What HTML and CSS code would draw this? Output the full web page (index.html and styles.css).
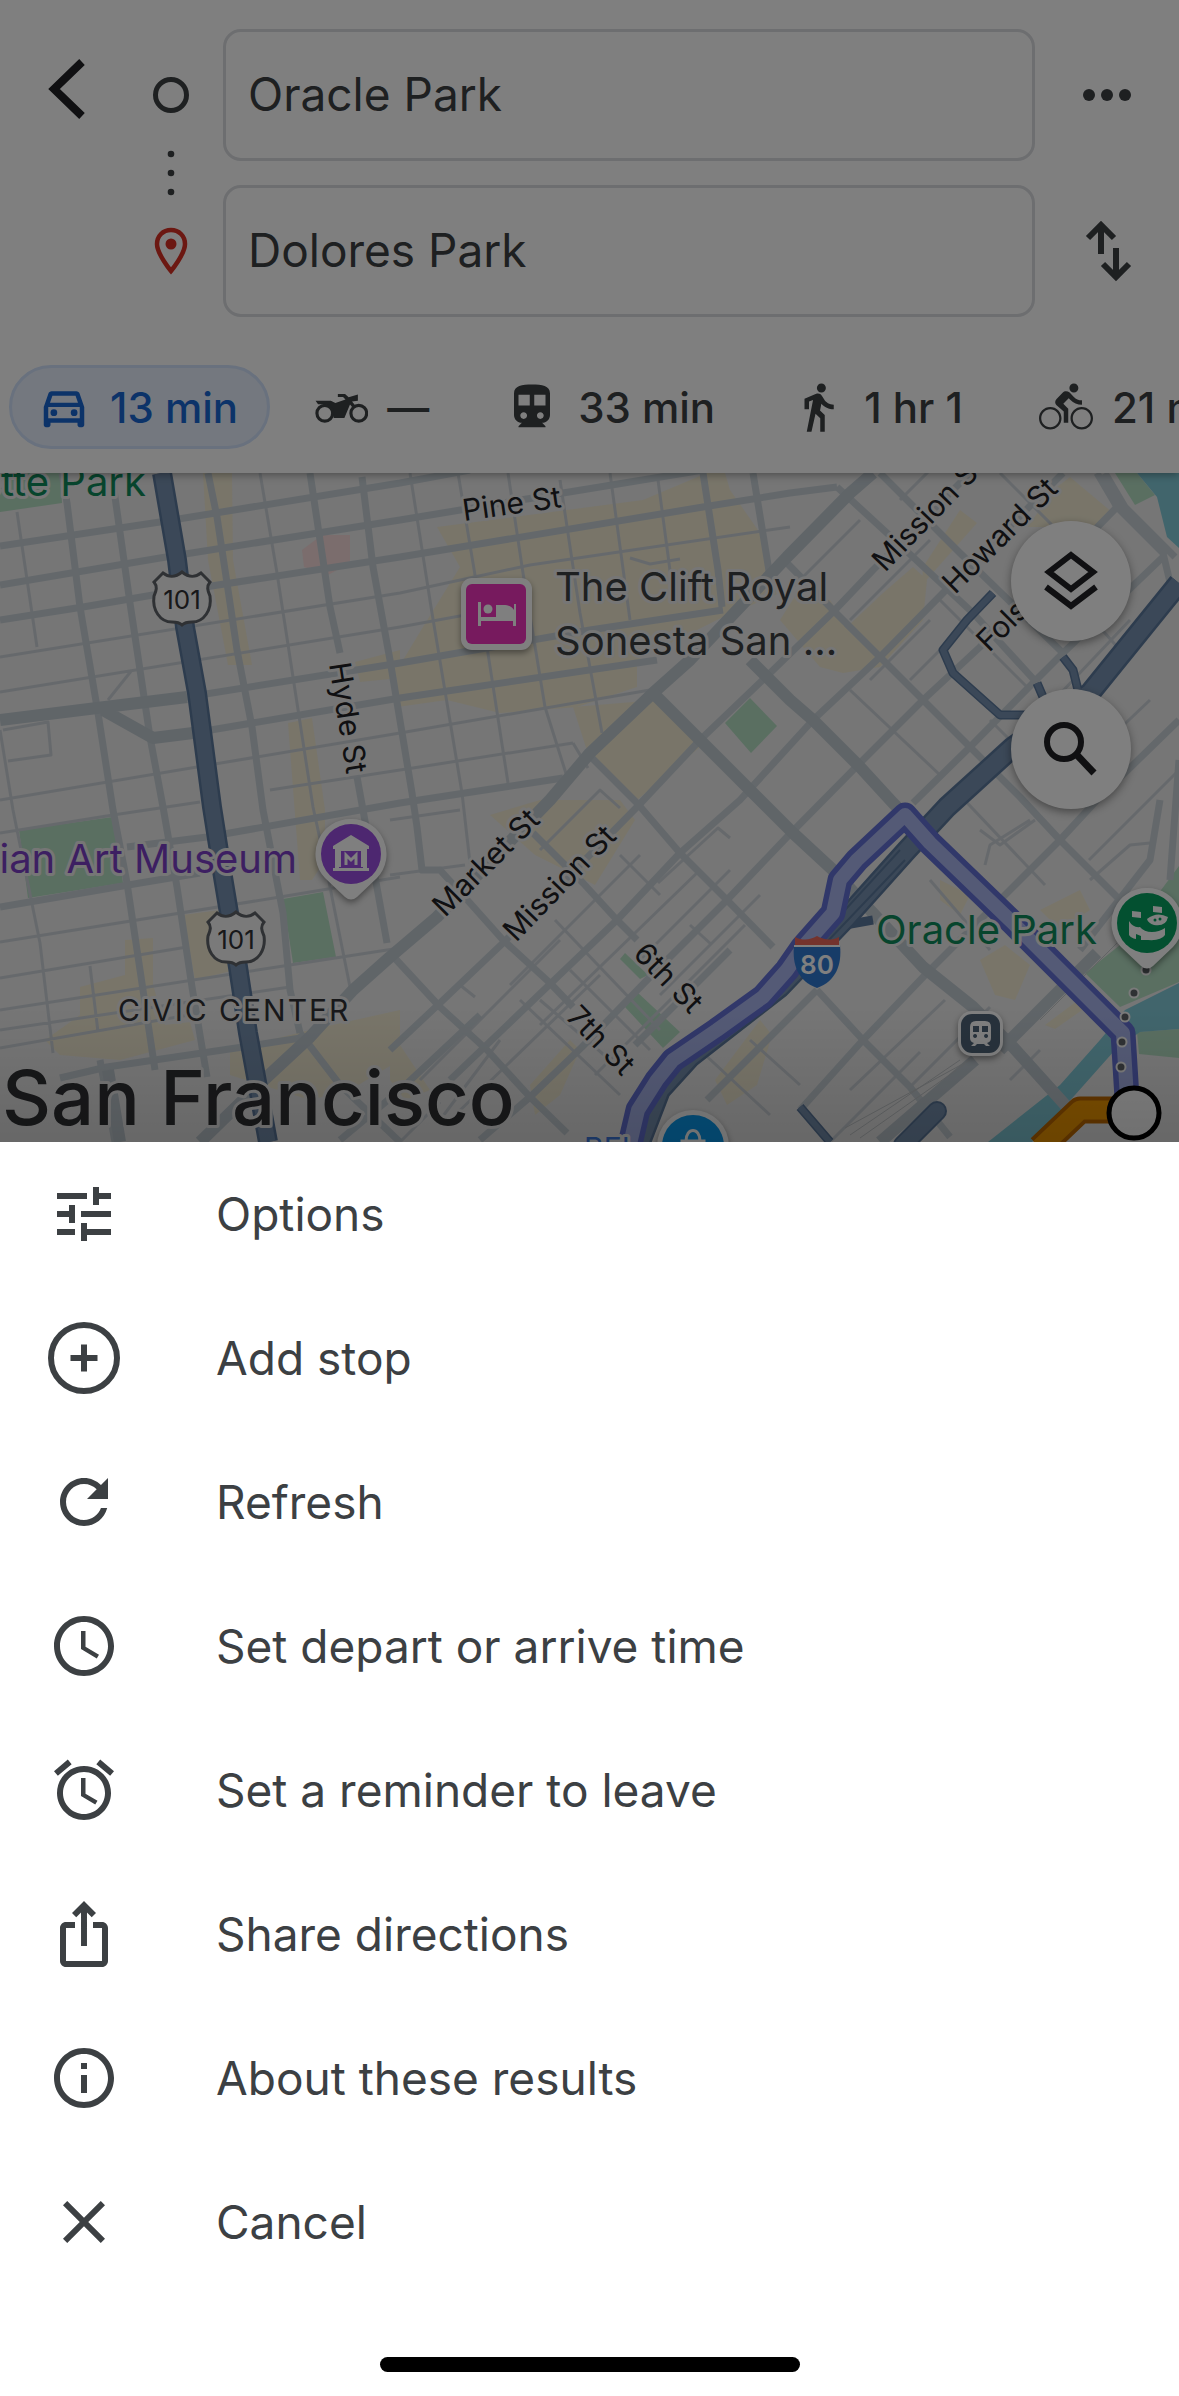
FILE: index.html
```html
<!DOCTYPE html>
<html lang="en">
<head>
  <meta charset="UTF-8">
  <meta name="viewport" content="width=device-width, initial-scale=1.0">
  <title>Directions</title>
  <link rel="stylesheet" href="styles.css">
</head>
<body>
  <main class="app">
    <header class="header">
      <form class="search">
        <button type="button" class="icon-button back" aria-label="Back">
          <svg class="icon-back" viewBox="0 0 72 72"><path d="M52 9 24 36l28 27" fill="none" stroke="#202124" stroke-width="8"/></svg>
        </button>
        <svg class="markers" viewBox="0 0 80 288">
          <circle cx="40" cy="66" r="15.500" fill="none" stroke="#3c4043" stroke-width="5"/>
          <g fill="#3c4043">
            <circle cx="40" cy="125" r="3.300"/>
            <circle cx="40" cy="144" r="3.300"/>
            <circle cx="40" cy="163" r="3.300"/>
          </g>
          <path d="M40 201c-8 0-14 6-14 14 0 10 14 27 14 27s14-17 14-27c0-8-6-14-14-14z" fill="none" stroke="#d93025" stroke-width="4.500"/>
          <circle cx="40" cy="215" r="5.500" fill="#d93025"/>
        </svg>
        <div class="fields">
          <input class="field" type="text" aria-label="Starting point" value="Oracle Park">
          <input class="field" type="text" aria-label="Destination" value="Dolores Park">
        </div>
        <div class="actions">
          <button type="button" class="icon-button" aria-label="More">
            <svg class="icon-action" viewBox="0 0 72 72" fill="#3c4043"><circle cx="18" cy="36" r="6"/><circle cx="36" cy="36" r="6"/><circle cx="54" cy="36" r="6"/></svg>
          </button>
          <button type="button" class="icon-button" aria-label="Swap start and destination">
            <svg class="icon-action" viewBox="0 0 72 72" fill="none" stroke="#3c4043" stroke-width="6"><path d="M30 39V11M17 23l13-13 13 13M45 33v28M32 49l13 13 13-13"/></svg>
          </button>
        </div>
      </form>

      <nav class="modes">
        <button type="button" class="mode active">
          <span class="mode-icon"><svg viewBox="0 0 24 24"><path fill-rule="evenodd" d="M18.920 6.010C18.720 5.420 18.160 5 17.500 5h-11c-.66 0-1.210.42-1.420 1.010L3 12v8c0 .55.45 1 1 1h1c.55 0 1-.45 1-1v-1h12v1c0 .55.45 1 1 1h1c.55 0 1-.45 1-1v-8l-2.080-5.990zM6.850 7h10.290l1.080 3.110H5.770L6.850 7zM19 17H5v-5h14v5z"/><circle cx="7.500" cy="14.500" r="1.500"/><circle cx="16.500" cy="14.500" r="1.500"/></svg></span>
          13 min
        </button>
        <button type="button" class="mode">
          <span class="mode-icon"><svg viewBox="0 0 24 24"><path d="M.7 9.200h6.800l2 1L14 8.700l-1.100-1.100h-2.300V6.200h3.200l1.600 1.500 4.100-1.300v2.800l-2.600.3 1.700 2.200-1.200.9-1.400-1.700-2.500 6H8.800l-.8-3-2.700-3.100H1.800z"/><circle cx="4.800" cy="14.800" r="3.500" fill="none" stroke="currentColor" stroke-width="1.400"/><circle cx="19.900" cy="14.800" r="3.500" fill="none" stroke="currentColor" stroke-width="1.400"/></svg></span>
          —
        </button>
        <button type="button" class="mode">
          <span class="mode-icon"><svg viewBox="0 0 24 24"><path d="M12 2c-4.420 0-8 .5-8 4v9.500C4 17.430 5.570 19 7.500 19L6 20.500v.5h12v-.5L16.500 19c1.930 0 3.500-1.570 3.500-3.500V6c0-3.500-3.580-4-8-4zM8.300 17.300c-.83 0-1.500-.67-1.500-1.500s.67-1.500 1.500-1.500 1.500.67 1.500 1.500-.67 1.500-1.500 1.500zm2.700-6H6V6.600h5v4.700zm4.700 6c-.83 0-1.500-.67-1.500-1.500s.67-1.500 1.500-1.500 1.500.67 1.500 1.500-.67 1.500-1.500 1.500zm2.300-6h-5V6.600h5v4.700z"/></svg></span>
          33 min
        </button>
        <button type="button" class="mode">
          <span class="mode-icon"><svg viewBox="0 0 24 24"><path d="M13.500 5.500c1.100 0 2-.9 2-2s-.9-2-2-2-2 .9-2 2 .9 2 2 2zM9.800 8.900L7 23h2.100l1.800-8 2.100 2v6h2v-7.500l-2.100-2 .6-3C14.800 12 16.800 13 19 13v-2c-1.900 0-3.500-1-4.300-2.400l-1-1.600c-.4-.6-1-1-1.700-1-.3 0-.5.1-.8.1L6 8.300V13h2V9.600l1.800-.7"/></svg></span>
          1 hr 1
        </button>
        <button type="button" class="mode">
          <span class="mode-icon"><svg viewBox="0 0 24 24"><path d="M15.500 5.500c1.100 0 2-.9 2-2s-.9-2-2-2-2 .9-2 2 .9 2 2 2zM5 12c-2.800 0-5 2.200-5 5s2.200 5 5 5 5-2.200 5-5-2.200-5-5-5zm0 9c-2.200 0-4-1.800-4-4s1.800-4 4-4 4 1.800 4 4-1.800 4-4 4zm5.800-10.500l2.400-2.400.8.8c1.300 1.300 3 2.100 5.100 2.100V9c-1.500 0-2.700-.6-3.600-1.500l-1.900-1.900c-.5-.4-1-.6-1.600-.6s-1.100.2-1.400.6L7.800 8.400c-.4.4-.6.9-.6 1.400 0 .6.2 1.100.6 1.400L11 14v5h2v-6.200l-2.200-2.300zM19 12c-2.800 0-5 2.200-5 5s2.200 5 5 5 5-2.200 5-5-2.200-5-5-5zm0 9c-2.200 0-4-1.800-4-4s1.800-4 4-4 4 1.800 4 4-1.800 4-4 4z"/></svg></span>
          21 min
        </button>
      </nav>
    </header>

    <section class="map">
      <svg class="map-canvas" viewBox="0 473 1179 669" preserveAspectRatio="xMidYMin slice">
        <defs>
          <g id="us-shield">
            <path d="M9 1c5 4 12 5 19-1 7 6 14 5 19 1l9 9c-4 5-2 9 0 14 2 14-6 26-18 26-4 0-7 0-10 3-3-3-6-3-10-3C6 50-2 38 0 24c2-5 4-9 0-14z" fill="#f5f5f5" stroke="#5f6368" stroke-width="3"/>
            <text x="28" y="37" text-anchor="middle" class="shield-text">101</text>
          </g>
        </defs>

        <!-- Commercial areas -->
        <g class="commercial">
          <path d="M203 473h29l1 87 19 105h-24l-20-105zM288 723l24-5 13 92v50l-13 20h-12zM355 662l45-12v28l-40 4z"/>
          <path d="M437 527 643 500l64-27h18l5 17 30 43 7 44 20 13-64 27-86 43v27l-60 20-77 6-53-13-50 7v-37l26-43 37-60z"/>
          <path d="M573 707 657 700l43 47-63 53-47-40zM923 567 960 510l17 13-55 62zM883 593l30-26 14 13-4 40-43 47-37 6-23-6-40-47 17-27 33 7 17 27zM1027 527l30-40 13-10 43 36-16 14z"/>
          <path d="m80 987 45-12v-35l28-2v47l12 40 25-3 5 18-75 20-60-5-15-15 35-25zM183 915l37-5 15 60-40 10zM310 1030l90-20v50l-50 30-40 10-80-25v-25z"/>
          <path d="m490 815 50-15 80 0 15 20-40 65-60-30zM390 1030l40 60-25 10-15-20zM530 1085l40-45 10 10-20 45-25 20zM715 1080l45-60 12 15-15 50-30 20zM940 880l30 15-10 20-20-15zM980 960l25-15 25 20-15 35-20-5zM1040 910l40-20 10 20-30 20zM1045 1025l40-30 10 6-40 28z"/>
        </g>
        <path d="M322 535h28v28l-22 12-24-8-2-17z" fill="#f6dada"/>

        <!-- Parks and water -->
        <g class="park">
          <path d="M0 473h60l2 30-62 9zM750 698l27 28-26 27-26-30zM19 830l94-13 10 66-95 15zM283 899l40-7 13 65-43 6zM625 953l23 22-8 4-20-20zM637 992l43 40-17 16-38-41zM1115 473h22l18 22-20 10z"/>
          <path d="M1179 866 1120 945l-35 28 35 34 59-25zM1137 1032l42-3v29l-40-4z"/>
        </g>
        <g class="water">
          <path d="M1137 473h42v75l-12-11-10-40zM1179 983l-54 27-25 30-40 45-72 57h44l43-47 40-45 25-18 39-3z"/>
        </g>

        <!-- Streets -->
        <g class="minor">
          <path d="M0 657 400 593 530 565 790 527M0 692 400 627 530 603M0 800 400 733 650 690M0 833 113 815 200 802M270 790 400 770 573 743M0 942 280 897 400 877M0 978 187 947M0 1010 290 965 400 948M0 1030 290 987M0 1048 200 1013M0 730 13 810 17 830 40 943 53 1053M17 512l20 135M260 473l17 100 18 117 18 117 12 55 25 125M3 730l45-8 3 33-43 6M108 700l24-30M90 966l8 66"/>
          <path d="M410 473l22 140 30 180 8 70M458 473l29 174 21 136M508 473l15 100 22 134 24 76M560 480l12 80 8 53 22 120M610 473l20 147M658 480l15 113M630 558l20 6 30-5M390 820l70-10M390 875l75-10M573 743l15 25M860 520l-75 75M900 500l60-60M620 855l40 40M540 850l60-60 20 18"/>
          <path d="M560 940l-140 140M600 975l-150 145M640 855l-130 130M650 885l-130 130M700 870l-160 155M745 925l-150 150M730 870l-90 90M760 895l-100 100M555 920l105 110M570 970l80 80M520 1000l100 95M730 838l-12-10-60 55M540 1000l70 60M500 1040l-60 80M690 925l22 20M400 1142l40-40M460 985l15 12"/>
          <path d="M850 620l80-80M870 680l60-60M845 625l90 88M850 690l90 85M910 680l80-80M990 720l70 70M955 790l90 95M1040 560l80 90M940 600l90 90M1000 473l80 80M1130 620l-90 95M1150 700l-100 95M1179 770l-90 90M980 830l20 15 35-25M985 865l5-20 40-25M930 880l60 70M850 1090l95-90M910 1087l80-80M830 1142l90-90M1010 1080l30-30M700 1050l70 65M750 1040l50 45M1090 880l40-35 20-2"/>
        </g>
        <g class="major">
          <path d="M0 546 160 522 400 483 470 470M0 585 160 558 400 520 563 493 703 470M0 620 83 607 153 595 400 557 703 507 790 493 837 487M97 708 187 697 400 663 590 630 723 610M153 738 193 733 400 698 657 660M0 907 140 883 200 873M127 847 207 837 400 803 563 778M60 1078 107 1067 243 1047 307 1037"/>
          <path d="M62 473l5 30 13 104 18 106 15 97 14 73 16 107 12 80M112 473l3 24 15 106 20 134 13 70 14 80 15 100 15 90M208 473l9 44 10 66 10 67 15 77 11 83 20 103 7 77 10 43M310 473l10 67 10 67 10 46M357 777l6 33 24 133M362 477l11 90 17 93 22 133 5 34 5 43h18l30 33 33 37 47 43 23 24M703 473l15 97 4 37M753 473l17 104M100 1060l15 82M300 1033l40 52 60 57"/>
          <path d="M390 1050l50-47 63-60 134-136 63-67 70-67 63-61 40-42 100-100M450 1080l97-93 70-67 63-67 60-53 73-80 67-63 63-64 120-120M480 1140l50-43 52-50 68-70 77-77 60-63 73-74 63-63 57-53 137-140M913 803l57-56 63-64 30-30 100-96M707 1100l43-43 67-67M800 1110l63-70 64-67 133-133 37-40 82-80M730 950l-95 95"/>
          <path d="M587 753l50 50 43 50 47 47 46 47M817 990l46 50 47 47 40 50M533 833l30 30 20 20 34 37 20 20M390 953l50 54 47 43 43 47 37 36M787 563l46 47 47 47 43 43 47 47 50 50 40 43 60 60M837 487l76 70 60 56 64 70M880 473l80 80 103 100M1097 473l20 34 46 46 12 50M1105 473l20 34 50 50M1179 760l-9 120M340 1140l60-50 80-75M1160 800l-10 60-70 90"/>
        </g>
        <g class="avenue">
          <path d="M0 720l97-12 90-11M103 710l50 28 40-5M873 473l-23 20-63 64-97 103-37 33-63 60-40 47-113 117-47 40-37 33-43 47-43 40-67 65"/>
          <path d="M653 693l47 47 47 47 46 46 40 37 90 97 50 40 40 40 54 60M750 660l40 40 23 20 47 47 33 36 20 20M1000 1050l97-97M975 1060l-95 82M108 1070l12 72"/>
        </g>
        <path class="rails" d="M960 1060l-110 75M965 1064l-105 74M970 1060l-125 68M1130 930l-90 90"/>

        <!-- Highways -->
        <g class="highway-edge">
          <path d="M162 473l15 87 8 67 12 66 15 114 11 70 15 90 10 66 20 109" stroke-width="20"/>
          <path d="M1179 583l-89 110-77 54-66 60-40 43-60 67-67 70-90 70-30 33-20 52" stroke-width="22"/>
          <path d="M993 593l-26 27-24 30 10 23 47 42h27M1037 683l6 14M1063 657l10 13 5 20M800 1107l30 35M845 925l28-5" stroke-width="9"/>
          <path d="M937 1111l-34 34" stroke-width="20" stroke-linecap="round"/>
        </g>
        <g class="highway">
          <path d="M162 473l15 87 8 67 12 66 15 114 11 70 15 90 10 66 20 109" stroke-width="15"/>
          <path d="M1179 583l-89 110-77 54-66 60-40 43-60 67-67 70-90 70-30 33-20 52" stroke-width="17"/>
          <path d="M993 593l-26 27-24 30 10 23 47 42h27M1037 683l6 14M1063 657l10 13 5 20M800 1107l30 35" stroke-width="6"/>
          <path d="M937 1111l-34 34" stroke-width="16" stroke-linecap="round"/>
        </g>
        <path class="median" d="M900 850l-110 120M905 860l-100 105"/>

        <!-- Routes -->
        <g fill="none" stroke-linejoin="round">
          <path d="M1125 1110h-45l-40 38" stroke="#c46c00" stroke-width="27"/>
          <path d="M1125 1110h-45l-40 38" stroke="#f59b00" stroke-width="19"/>
          <path d="M630 1144l8-34 19-30 16-20 44-30 46-33 24-27 16-23 30-34 7-33 17-20 48-45 25 28 83 80 84 84 26 26 4 65" stroke="#6370d4" stroke-width="25"/>
          <path d="M630 1144l8-34 19-30 16-20 44-30 46-33 24-27 16-23 30-34 7-33 17-20 48-45 25 28 83 80 84 84 26 26 4 65" stroke="#a9b5ec" stroke-width="14"/>
        </g>
        <g fill="#5f6368" stroke="#f5f5f5" stroke-width="2">
          <circle cx="1146" cy="970" r="4.500"/><circle cx="1134" cy="993" r="4.500"/><circle cx="1125" cy="1017" r="4.500"/><circle cx="1122" cy="1042" r="4.500"/><circle cx="1121" cy="1067" r="4.500"/>
        </g>
        <circle cx="1134" cy="1113" r="25" fill="#fff" stroke="#000" stroke-width="5"/>

        <!-- Labels -->
        <g class="road-label">
          <text transform="translate(464 521) rotate(-8)">Pine St</text>
          <text transform="translate(329 664) rotate(81)">Hyde St</text>
          <text transform="translate(885 573) rotate(-46)">Mission St</text>
          <text transform="translate(955 595) rotate(-45)">Howard St</text>
          <text transform="translate(989 653) rotate(-45)">Folsom St</text>
          <text transform="translate(445 918) rotate(-45)">Market St</text>
          <text transform="translate(516 943) rotate(-46)">Mission St</text>
          <text transform="translate(632 955) rotate(46)">6th St</text>
          <text transform="translate(565 1018) rotate(46)">7th St</text>
        </g>
        <g class="place-label">
          <text x="146" y="496" text-anchor="end" fill="#0f8a5b">ette Park</text>
          <text x="297" y="873" text-anchor="end" fill="#7b3fc4">sian Art Museum</text>
          <text x="876" y="944" fill="#0f8a5b">Oracle Park</text>
          <text x="555" y="601" fill="#3c4043">The Clift Royal</text>
          <text x="555" y="655" fill="#3c4043">Sonesta San ...</text>
          <text x="584" y="1159" fill="#3d7be0" class="label-small">BEL</text>
        </g>
        <text x="118" y="1021" class="district-label">CIVIC CENTER</text>
        <text x="2" y="1125" class="city-label">San Francisco</text>

        <!-- Shields -->
        <use href="#us-shield" x="154" y="572"/>
        <use href="#us-shield" x="208" y="912"/>
        <path d="M794 945h46c2 20-4 36-23 43-19-7-25-23-23-43z" fill="#2f78d0"/>
        <path d="M795 946v-9c8 4 15 3 22-1 7 4 14 5 22 1v9z" fill="#e8665a"/>
        <path d="M794 946h46" stroke="#fff" stroke-width="2"/>
        <text x="817" y="974" text-anchor="middle" class="interstate-text">80</text>

        <!-- Pins -->
        <g class="pin">
          <rect x="461" y="578" width="71" height="72" rx="11" fill="#fff"/>
          <path d="M351 819a35 35 0 0 1 26 59l-20 19q-6 5-12 0l-20-19a35 35 0 0 1 26-59zM1147 888a35 35 0 0 1 26 59l-20 19q-6 5-12 0l-20-19a35 35 0 0 1 26-59z" fill="#fff"/>
          <circle cx="693" cy="1146" r="36" fill="#fff"/>
          <rect x="958" y="1011" width="45" height="45" rx="14" fill="#fff"/>
        </g>
        <rect x="466" y="584" width="60" height="60" rx="6" fill="#ee35bd"/>
        <path d="M478 602h3v15h15v-12h7c6 0 9 2 11 5v-6h-1 3v22h-3v-5h-32v5h-3z" fill="#fff"/>
        <circle cx="488" cy="609" r="4.500" fill="#fff"/>
        <circle cx="351" cy="854" r="30" fill="#9b4fe0"/>
        <path d="M351 835l18 11v3h-36v-3zM335 850h4v18h-4zM363 850h4v18h-4zM333 868h36v3h-36z" fill="#fff"/>
        <path fill-rule="evenodd" d="M335 849h32v18h-32zM341 851v16h20v-16z" fill="#fff"/>
        <path d="M346 865v-10l5 5 5-5v10" fill="none" stroke="#fff" stroke-width="3"/>
        <circle cx="1147" cy="923" r="30" fill="#06a060"/>
        <path d="M1132 911l9 1v6l-9-1zM1153 906l9 1v6l-9-1zM1129 921q4 7 11 6 4 5 12 5 7 0 13-4v7q-4 6-17 5h-7v-4l-5-2v5q-5-1-7-4zM1147 919q10-8 21-2-2 10-14 8-6-2-7-6z" fill="#fff"/>
        <circle cx="1155" cy="920" r="1.500" fill="#06a060"/><circle cx="1160" cy="919" r="1.500" fill="#06a060"/>
        <circle cx="693" cy="1146" r="31" fill="#0a9cf2"/>
        <path d="M682 1141h22v12h-22zM686 1141c0-14 14-14 14 0" fill="none" stroke="#fff" stroke-width="3"/>
        <rect x="961" y="1014" width="39" height="39" rx="11" fill="#4f6478"/>
        <path fill-rule="evenodd" d="M976 1021h9q6 0 6 6v11q0 4-4 5l3 3h-4l-2-2h-7l-2 2h-4l3-3q-4-1-4-5v-11q0-6 6-6zm-3 5v6h6v-6zm9 0v6h6v-6zm-7 8a2 2 0 1 0 .1 0zm11 0a2 2 0 1 0 .1 0z" fill="#fff"/>
      </svg>

      <div class="map-controls">
        <button type="button" class="fab" aria-label="Layers">
          <svg viewBox="0 0 72 72" fill="none" stroke="#202124" stroke-width="6"><path d="M36 10 58 27 36 44 14 27zM11 42l25 19 25-19"/></svg>
        </button>
        <button type="button" class="fab" aria-label="Search along route">
          <svg viewBox="0 0 72 72" fill="none" stroke="#202124"><circle cx="29" cy="29" r="17" stroke-width="6"/><path d="M41 41l18 19" stroke-width="7"/></svg>
        </button>
      </div>
      <div class="sheet-shadow"></div>
    </section>

    <div class="scrim"></div>
  </main>

  <!-- Overflow menu sheet -->
  <section class="sheet">
    <ul class="menu">
      <li><button type="button" class="menu-item">
        <svg viewBox="0 0 24 24"><path d="M3 17v2h6v-2H3zM3 5v2h10V5H3zm10 16v-2h8v-2h-8v-2h-2v6h2zM7 9v2H3v2h4v2h2V9H7zm14 4v-2H11v2h10zm-6-4h2V7h4V5h-4V3h-2v6z"/></svg>
        Options
      </button></li>
      <li><button type="button" class="menu-item">
        <svg viewBox="0 0 24 24"><circle cx="12" cy="12" r="11" fill="none" stroke="currentColor" stroke-width="2"/><path d="M11 7.500h2V11h3.500v2H13v3.500h-2V13H7.500v-2H11z"/></svg>
        Add stop
      </button></li>
      <li><button type="button" class="menu-item">
        <svg viewBox="0 0 24 24"><path d="M17.650 6.350C16.200 4.900 14.210 4 12 4c-4.420 0-7.990 3.580-7.990 8s3.570 8 7.990 8c3.730 0 6.840-2.550 7.730-6h-2.080c-.82 2.330-3.040 4-5.650 4-3.310 0-6-2.690-6-6s2.690-6 6-6c1.660 0 3.140.69 4.220 1.780L13 11h7V4l-2.350 2.350z"/></svg>
        Refresh
      </button></li>
      <li><button type="button" class="menu-item">
        <svg viewBox="0 0 24 24"><path d="M11.990 2C6.470 2 2 6.480 2 12s4.470 10 9.990 10C17.520 22 22 17.520 22 12S17.520 2 11.990 2zM12 20c-4.420 0-8-3.580-8-8s3.580-8 8-8 8 3.580 8 8-3.580 8-8 8zm.5-13H11v6l5.250 3.150.75-1.230-4.500-2.670z"/></svg>
        Set depart or arrive time
      </button></li>
      <li><button type="button" class="menu-item">
        <svg viewBox="0 0 24 24"><path d="M22 5.720l-4.600-3.860-1.290 1.530 4.600 3.860L22 5.720zM7.880 3.390L6.600 1.860 2 5.710l1.290 1.530 4.590-3.850zM12.500 8H11v6l4.750 2.850.75-1.230-4-2.370V8zM12 4c-4.970 0-9 4.030-9 9s4.020 9 9 9c4.970 0 9-4.030 9-9s-4.030-9-9-9zm0 16c-3.870 0-7-3.130-7-7s3.130-7 7-7 7 3.130 7 7-3.130 7-7 7z"/></svg>
        Set a reminder to leave
      </button></li>
      <li><button type="button" class="menu-item">
        <svg viewBox="0 0 24 24"><path d="M16 5l-1.420 1.420-1.590-1.590V16h-1.980V4.830L9.420 6.420 8 5l4-4 4 4zm4 5v11c0 1.100-.9 2-2 2H6c-1.110 0-2-.9-2-2V10c0-1.110.89-2 2-2h3v2H6v11h12V10h-3V8h3c1.100 0 2 .89 2 2z"/></svg>
        Share directions
      </button></li>
      <li><button type="button" class="menu-item">
        <svg viewBox="0 0 24 24"><path d="M11 7h2v2h-2zm0 4h2v6h-2zm1-9C6.480 2 2 6.480 2 12s4.480 10 10 10 10-4.480 10-10S17.520 2 12 2zm0 18c-4.410 0-8-3.590-8-8s3.590-8 8-8 8 3.590 8 8-3.590 8-8 8z"/></svg>
        About these results
      </button></li>
      <li><button type="button" class="menu-item">
        <svg viewBox="0 0 24 24"><path d="M19 6.410L17.590 5 12 10.590 6.410 5 5 6.410 10.590 12 5 17.590 6.410 19 12 13.410 17.590 19 19 17.590 13.410 12z"/></svg>
        Cancel
      </button></li>
    </ul>
    <div class="home-indicator"></div>
  </section>
</body>
</html>
```
FILE: styles.css
```css
* {
  box-sizing: border-box;
}

body {
  margin: 0;
  min-height: 100vh;
  display: flex;
  flex-direction: column;
  background: #fff;
  color: #3c4043;
  font-family: Inter, "Liberation Sans", sans-serif;
}

button {
  margin: 0;
  padding: 0;
  border: none;
  background: none;
  color: inherit;
  font: inherit;
  cursor: pointer;
}

svg {
  display: block;
}

/* App behind the sheet */
.app {
  position: relative;
  flex: 1;
  display: flex;
  flex-direction: column;
  overflow: hidden;
}

.header {
  position: relative;
  z-index: 1;
  padding: 29px 0 24px;
  background: #fff;
  box-shadow: 0 2px 8px rgba(0, 0, 0, 0.35);
}

/* Start and destination */
.search {
  display: grid;
  grid-template-columns: 131px 80px 1fr 144px;
}

.icon-button {
  display: flex;
  align-items: center;
  justify-content: center;
  height: 132px;
}

.back {
  height: 120px;
}

.icon-back,
.icon-action {
  width: 72px;
  height: 72px;
}

.markers {
  width: 80px;
  height: 288px;
}

.fields {
  display: flex;
  flex-direction: column;
  gap: 24px;
  padding-left: 12px;
}

.field {
  width: 100%;
  height: 132px;
  padding: 0 22px 2px;
  border: 3px solid #dadce0;
  border-radius: 18px;
  background: #fff;
  color: #3c4043;
  font-family: inherit;
  font-size: 46px;
}

.actions {
  display: flex;
  flex-direction: column;
  gap: 24px;
}

/* Travel modes */
.modes {
  display: flex;
  gap: 16px;
  margin-top: 48px;
  padding-left: 9px;
  overflow: hidden;
}

.mode {
  flex: none;
  display: flex;
  align-items: center;
  gap: 16px;
  height: 84px;
  padding: 0 29px 0 22px;
  border: 3px solid transparent;
  border-radius: 42px;
  font-size: 42px;
  font-weight: 500;
  white-space: nowrap;
}

.mode.active {
  background: #e8f0fe;
  border-color: #d2e3fc;
  color: #1967d2;
}

.mode-icon {
  display: flex;
  justify-content: center;
  width: 60px;
}

.mode-icon svg {
  width: 54px;
  height: 54px;
  fill: currentColor;
}

/* Map */
.map {
  position: relative;
  flex: 1;
  min-height: 400px;
  overflow: hidden;
  background: #ececec;
}

.map-canvas {
  position: absolute;
  width: 100%;
  height: 100%;
}

.commercial {
  fill: #f2ebd3;
}

.park {
  fill: #b4dec3;
}

.water {
  fill: #82cbd9;
}

.minor,
.major,
.avenue,
.rails,
.highway,
.highway-edge,
.median {
  fill: none;
  stroke-linejoin: round;
}

.minor {
  stroke: #cdd3d9;
  stroke-width: 3px;
}

.major {
  stroke: #c8d1d7;
  stroke-width: 7px;
}

.avenue {
  stroke: #c0cad1;
  stroke-width: 12px;
}

.rails {
  stroke: #c4c8cb;
  stroke-width: 1px;
}

.highway-edge {
  stroke: #5b789c;
}

.highway {
  stroke: #7791b0;
}

.median {
  stroke: #5b789c;
  stroke-width: 2px;
}

.road-label,
.place-label,
.district-label,
.city-label {
  paint-order: stroke;
  stroke: #ececec;
  stroke-width: 6px;
  stroke-linejoin: round;
}

.road-label {
  fill: #202124;
  font-size: 30px;
}

.place-label {
  font-size: 40px;
}

.label-small {
  font-size: 30px;
}

.district-label {
  fill: #303134;
  font-size: 30px;
  letter-spacing: 2px;
}

.city-label {
  fill: #303134;
  font-size: 76px;
  font-weight: 500;
}

.shield-text {
  fill: #303134;
  font-size: 26px;
}

.interstate-text {
  fill: #fff;
  font-size: 26px;
  font-weight: 600;
}

.pin {
  filter: drop-shadow(0 3px 3px rgba(0, 0, 0, 0.4));
}

.map-controls {
  position: absolute;
  top: 48px;
  right: 48px;
  display: flex;
  flex-direction: column;
  gap: 48px;
}

.fab {
  display: flex;
  align-items: center;
  justify-content: center;
  width: 120px;
  height: 120px;
  border-radius: 50%;
  background: #fff;
  box-shadow: 0 3px 8px rgba(0, 0, 0, 0.4);
}

.fab svg {
  width: 72px;
  height: 72px;
}

.sheet-shadow {
  position: absolute;
  inset: 0;
  background: linear-gradient(transparent 80%, rgba(0, 0, 0, 0.12));
  pointer-events: none;
}

.scrim {
  position: absolute;
  inset: 0;
  z-index: 2;
  background: rgba(0, 0, 0, 0.5);
}

/* Bottom sheet */
.sheet {
  background: #fff;
}

.menu {
  margin: 0;
  padding: 0;
  list-style: none;
}

.menu-item {
  display: flex;
  align-items: center;
  gap: 96px;
  width: 100%;
  height: 144px;
  padding: 0 48px;
  font-size: 46px;
  text-align: left;
}

.menu-item svg {
  flex: none;
  width: 72px;
  height: 72px;
  fill: currentColor;
}

.home-indicator {
  width: 420px;
  height: 15px;
  margin: 63px auto 24px;
  border-radius: 8px;
  background: #000;
}
```
